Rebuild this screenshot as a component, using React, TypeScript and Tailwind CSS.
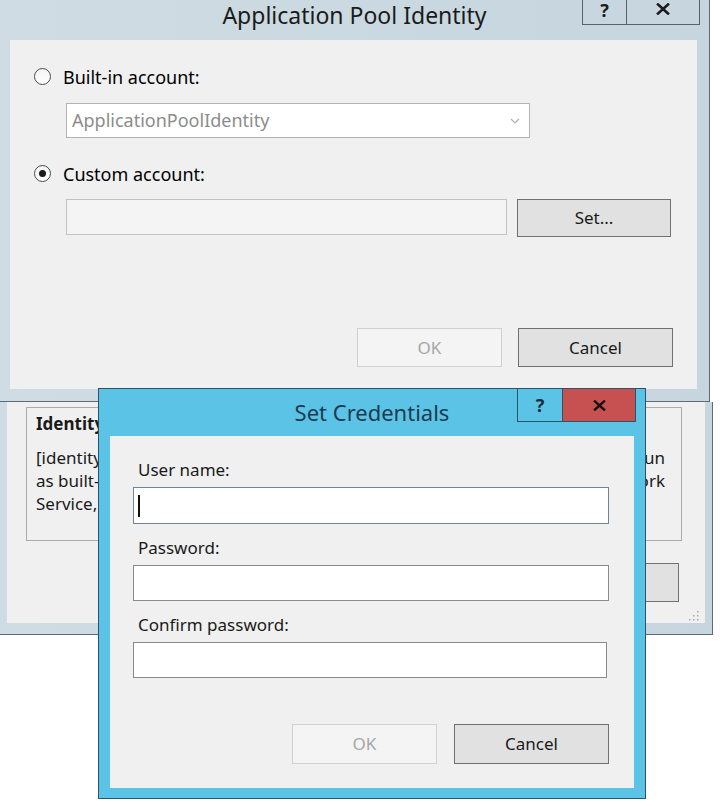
import type { ReactNode } from "react";

function Radio({ checked }: { checked?: boolean }) {
  return (
    <span className="flex h-[17px] w-[17px] shrink-0 items-center justify-center rounded-full border border-[#4a4a4a] bg-gradient-to-b from-[#f4f4f4] to-white">
      {checked && <span className="h-[7px] w-[7px] rounded-full bg-[#1a1a1a]" />}
    </span>
  );
}

function WinButton({
  children,
  disabled,
  className,
}: {
  children: ReactNode;
  disabled?: boolean;
  className: string;
}) {
  return (
    <button
      type="button"
      className={
        disabled
          ? `flex items-center justify-center border border-[#d0d0d0] bg-[#f4f4f4] text-[17px] text-[#a6a6a6] ${className}`
          : `flex items-center justify-center border border-[#707070] bg-[#e1e1e1] text-[17px] text-[#1a1a1a] ${className}`
      }
    >
      {children}
    </button>
  );
}

function CloseGlyph({ className }: { className: string }) {
  return (
    <svg viewBox="0 0 14 12" className={className}>
      <path d="M2 1.5 L12 10.5 M12 1.5 L2 10.5" stroke="currentColor" strokeWidth="2.6" strokeLinecap="square" />
    </svg>
  );
}

function AppPoolDialog() {
  return (
    <div className="flex h-[402px] w-[710px] flex-col border-r border-b border-[#5d6b75] bg-gradient-to-r from-[#cfdce4] to-[#c6d5de]">
      <div className="grid h-[40px] grid-cols-[1fr_auto_1fr]">
        <div />
        <div className="pt-[1px] text-[23px] leading-[28px] text-[#1b1b1b]">Application Pool Identity</div>
        <div className="flex justify-end pr-[9px]">
          <div className="flex h-[25px] text-[#1b1b1b]">
            <div className="flex w-[45px] justify-center border border-t-0 border-[#55636d] text-[18px] font-bold leading-[20px]">
              ?
            </div>
            <div className="flex w-[73px] justify-center border-r border-b border-[#55636d] pt-[3px]">
              <CloseGlyph className="h-[12px] w-[14px]" />
            </div>
          </div>
        </div>
      </div>

      <div className="mb-[12px] ml-[10px] mr-[12px] flex flex-1 flex-col bg-[#f0f0f0] px-[24px] pt-[28px] pb-[22px]">
        <label className="flex h-[17px] items-center gap-[12px]">
          <Radio />
          <span className="text-[18px] leading-none">Built-in account:</span>
        </label>
        <div className="ml-[32px] mt-[18px] flex h-[35px] w-[464px] items-center justify-between border border-[#b4b4b4] bg-white pl-[5px] pr-[9px] text-[18px] text-[#8c8c8c]">
          <span>ApplicationPoolIdentity</span>
          <svg viewBox="0 0 10 6" className="h-[6px] w-[10px]">
            <path d="M1 1 L5 5 L9 1" fill="none" stroke="#b0b0b0" strokeWidth="1.2" />
          </svg>
        </div>

        <label className="mt-[27px] flex h-[17px] items-center gap-[12px]">
          <Radio checked />
          <span className="text-[18px] leading-none">Custom account:</span>
        </label>
        <div className="ml-[32px] mt-[17px] flex items-start gap-[10px]">
          <div className="h-[36px] w-[441px] border border-[#c2c2c2] bg-[#f4f4f4]" />
          <WinButton className="h-[38px] w-[154px] border-[#6e8696]">Set...</WinButton>
        </div>

        <div className="mt-auto flex justify-end gap-[16px]">
          <WinButton disabled className="h-[39px] w-[145px]">
            OK
          </WinButton>
          <WinButton className="h-[39px] w-[155px]">Cancel</WinButton>
        </div>
      </div>
    </div>
  );
}

// only the two ends of each line show beside the dialog that lies over the box
function DescLine({ left, right }: { left: string; right: string }) {
  return (
    <div className="flex justify-between">
      <span className="w-[62px] overflow-hidden whitespace-nowrap">{left}</span>
      <span className="flex w-[20px] justify-end overflow-hidden whitespace-nowrap">
        <span>{right}</span>
      </span>
    </div>
  );
}

function AdvancedWindow() {
  return (
    <div className="flex h-[233px] w-[713px] flex-col border-r border-b border-[#5d6b75] bg-gradient-to-r from-[#cfdce4] to-[#c6d5de] px-[7px] pb-[11px]">
      <div className="relative flex flex-1 flex-col bg-[#f0f0f0] pl-[19px] pr-[23px] pt-[5px]">
        <div className="h-[134px] border border-[#ababab] pl-[9px] pr-[16px] pt-[4px] text-[17px] leading-[23px] text-[#1a1a1a]">
          <div className="w-[62px] overflow-hidden whitespace-nowrap font-bold">Identity</div>
          <div className="mt-[11px]">
            <DescLine left="[identityType, username, password] Configures the application pool to" right="run" />
            <DescLine left="as built-in account, i.e. Application Pool Identity (recommended), Network" right="Network" />
            <DescLine left="Service, Local System, Local Service, or as a specific user identity." right="" />
          </div>
        </div>
        <div className="mr-[3px] mt-[22px] flex justify-end gap-[16px]">
          <WinButton className="h-[39px] w-[145px] border-[#8a8a8a] bg-[#dcdcdc]">OK</WinButton>
          <WinButton className="h-[39px] w-[155px] border-[#8a8a8a] bg-[#dcdcdc]">Cancel</WinButton>
        </div>
        <svg viewBox="0 0 10 10" className="absolute bottom-[2px] right-[6px] h-[10px] w-[10px]">
          <g fill="#a8a8a8">
            <rect x="8" y="0" width="1.5" height="1.5" />
            <rect x="8" y="4" width="1.5" height="1.5" />
            <rect x="4" y="4" width="1.5" height="1.5" />
            <rect x="8" y="8" width="1.5" height="1.5" />
            <rect x="4" y="8" width="1.5" height="1.5" />
            <rect x="0" y="8" width="1.5" height="1.5" />
          </g>
        </svg>
      </div>
    </div>
  );
}

function CredentialsDialog() {
  return (
    <div className="absolute left-[98px] top-[388px] flex h-[411px] w-[548px] flex-col border border-[#2f5366] bg-[#5bc3e6]">
      <div className="grid h-[47px] grid-cols-[1fr_auto_1fr]">
        <div />
        <div className="pt-[10px] text-[22px] leading-[26px] text-[#1c3b50]">Set Credentials</div>
        <div className="flex justify-end pr-[9px]">
          <div className="flex h-[33px]">
            <div className="flex w-[46px] items-center justify-center border-x border-b border-[#2f5366] text-[18px] font-bold text-[#1b2a35]">
              ?
            </div>
            <div className="flex w-[73px] items-center justify-center border-r border-b border-[#2f5366] bg-[#c75050] text-[#111]">
              <CloseGlyph className="h-[11px] w-[13px]" />
            </div>
          </div>
        </div>
      </div>

      <div className="mx-[11px] mb-[10px] flex flex-1 flex-col bg-[#f0f0f0] pl-[23px] pr-[24px] pt-[24px] pb-[24px] text-[17px] text-[#1a1a1a]">
        <label className="pl-[5px] leading-[20px]">User name:</label>
        <div className="mt-[7px] flex h-[37px] w-[476px] items-center border border-[#6f8497] bg-white pl-[4px]">
          <span className="h-[22px] w-[2px] bg-[#111]" />
        </div>

        <label className="mt-[14px] pl-[5px] leading-[20px]">Password:</label>
        <div className="mt-[7px] h-[36px] w-[476px] border border-[#8a8a8a] bg-white" />

        <label className="mt-[14px] pl-[5px] leading-[20px]">Confirm password:</label>
        <div className="mt-[7px] h-[36px] w-[474px] border border-[#8a8a8a] bg-white" />

        <div className="mt-auto flex justify-end gap-[17px] pr-[1px]">
          <WinButton disabled className="h-[40px] w-[145px]">
            OK
          </WinButton>
          <WinButton className="h-[40px] w-[155px]">Cancel</WinButton>
        </div>
      </div>
    </div>
  );
}

export default function App() {
  return (
    <div className="relative h-[806px] w-[720px] overflow-hidden bg-white font-['Noto_Sans',sans-serif]">
      <AppPoolDialog />
      <AdvancedWindow />
      <CredentialsDialog />
    </div>
  );
}
